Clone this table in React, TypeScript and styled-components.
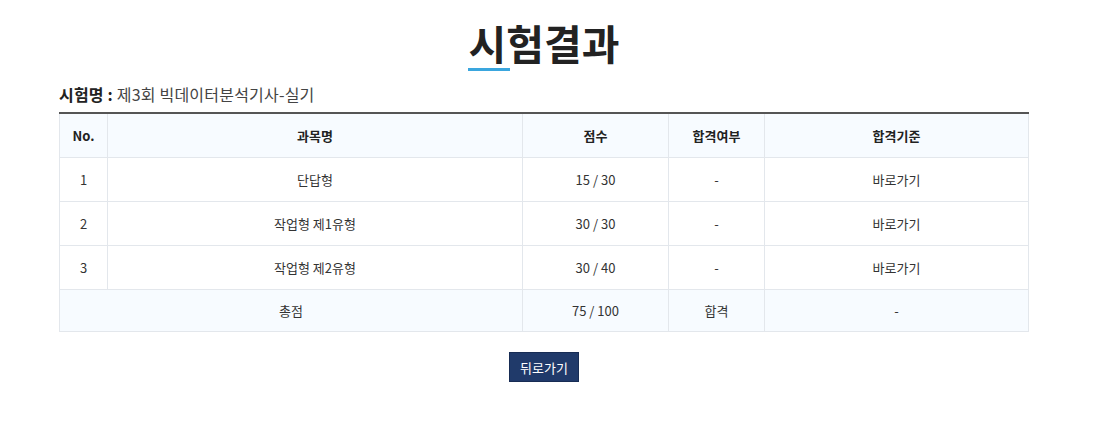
import React from "react";
import styled, { createGlobalStyle } from "styled-components";

const Global = createGlobalStyle`
  html, body { margin: 0; padding: 0; background: #fff; }
  body { font-family: "Noto Sans CJK KR", "Noto Sans", sans-serif; color: #333; }
`;

const Page = styled.div`
  width: 970px;
  margin-left: 59px;
  padding-top: 13px;
  display: flex;
  flex-direction: column;
  align-items: stretch;
`;

const Title = styled.h1`
  margin: 0;
  text-align: center;
  font-size: 41px;
  font-weight: 700;
  line-height: 58px;
  color: #222;
  letter-spacing: 0;
`;

const Accent = styled.span`
  display: inline-block;
  position: relative;
  &::after {
    content: "";
    position: absolute;
    left: -1px;
    right: -4px;
    bottom: 0;
    height: 3px;
    background: #3aa6de;
  }
`;

const ExamName = styled.div`
  margin-top: 12px;
  font-size: 16px;
  letter-spacing: 0.2px;
  line-height: 22px;
  color: #444;
  padding-bottom: 7px;
  strong { font-weight: 700; color: #222; }
`;

const Table = styled.table`
  width: 970px;
  border-collapse: collapse;
  border-top: 2px solid #555;
  font-size: 13px;
  color: #333;
  table-layout: fixed;
`;

const Th = styled.th<{ $w?: number }>`
  width: ${(p) => (p.$w ? `${p.$w}px` : "auto")};
  height: 43px;
  background: #f7fbff;
  font-weight: 700;
  border: 1px solid #e3e7ec;
  border-top: none;
  padding: 0;
  color: #222;
`;

const Td = styled.td<{ $shade?: boolean }>`
  height: ${(p) => (p.$shade ? "41px" : "43px")};
  text-align: center;
  border: 1px solid #e3e7ec;
  padding: 0;
  background: ${(p) => (p.$shade ? "#f7fbff" : "#fff")};
`;

const Actions = styled.div`
  display: flex;
  justify-content: center;
  margin-top: 20px;
`;

const BackButton = styled.button`
  height: 30px;
  padding: 0 10px;
  background: #203a6a;
  border: 1px solid #172c54;
  color: #fff;
  font-family: "Noto Sans CJK KR", sans-serif;
  font-size: 13px;
  cursor: pointer;
`;

const rows = [
  { no: 1, name: "단답형", score: "15 / 30" },
  { no: 2, name: "작업형 제1유형", score: "30 / 30" },
  { no: 3, name: "작업형 제2유형", score: "30 / 40" },
];

export default function App() {
  return (
    <>
      <Global />
      <Page>
        <Title>
          <Accent>시</Accent>험결과
        </Title>
        <ExamName>
          <strong>시험명 : </strong>제3회 빅데이터분석기사-실기
        </ExamName>
        <Table>
          <thead>
            <tr>
              <Th $w={47}>No.</Th>
              <Th $w={414}>과목명</Th>
              <Th $w={145}>점수</Th>
              <Th $w={95}>합격여부</Th>
              <Th>합격기준</Th>
            </tr>
          </thead>
          <tbody>
            {rows.map((r) => (
              <tr key={r.no}>
                <Td>{r.no}</Td>
                <Td>{r.name}</Td>
                <Td>{r.score}</Td>
                <Td>-</Td>
                <Td>바로가기</Td>
              </tr>
            ))}
            <tr>
              <Td $shade colSpan={2}>총점</Td>
              <Td $shade>75 / 100</Td>
              <Td $shade>합격</Td>
              <Td $shade>-</Td>
            </tr>
          </tbody>
        </Table>
        <Actions>
          <BackButton>뒤로가기</BackButton>
        </Actions>
      </Page>
    </>
  );
}
